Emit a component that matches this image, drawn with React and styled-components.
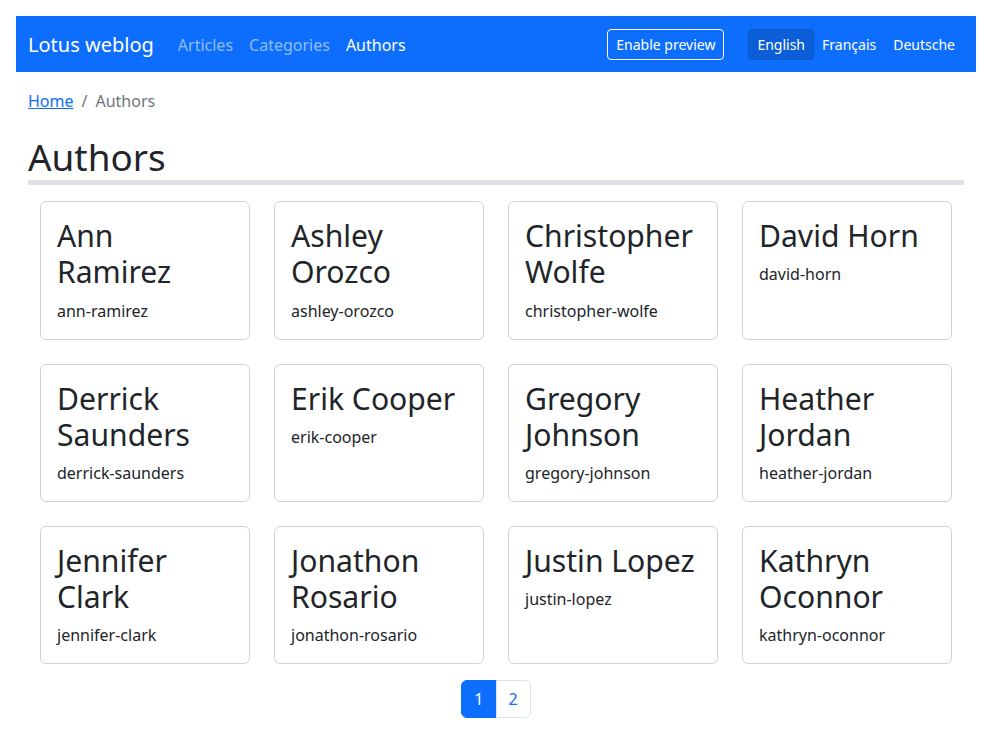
import React from "react";
import styled, { createGlobalStyle } from "styled-components";

const GlobalStyle = createGlobalStyle`
  * { box-sizing: border-box; }
  body {
    margin: 0;
    font-family: "Noto Sans", "Liberation Sans", sans-serif;
    font-size: 16px;
    line-height: 1.5;
    color: #212529;
    background: #fff;
  }
`;

const authors = [
  ["Ann Ramirez", "ann-ramirez"],
  ["Ashley Orozco", "ashley-orozco"],
  ["Christopher Wolfe", "christopher-wolfe"],
  ["David Horn", "david-horn"],
  ["Derrick Saunders", "derrick-saunders"],
  ["Erik Cooper", "erik-cooper"],
  ["Gregory Johnson", "gregory-johnson"],
  ["Heather Jordan", "heather-jordan"],
  ["Jennifer Clark", "jennifer-clark"],
  ["Jonathon Rosario", "jonathon-rosario"],
  ["Justin Lopez", "justin-lopez"],
  ["Kathryn Oconnor", "kathryn-oconnor"],
];

const Page = () => {
  return (
    <Container>
      <GlobalStyle />
      <Navbar>
        <Brand href="#">Lotus weblog</Brand>
        <NavLinks>
          <NavLink href="#">Articles</NavLink>
          <NavLink href="#">Categories</NavLink>
          <NavLink href="#" active>
            Authors
          </NavLink>
        </NavLinks>
        <RightSide>
          <OutlineButton>Enable preview</OutlineButton>
          <LangGroup>
            <LangButton active>English</LangButton>
            <LangButton>Français</LangButton>
            <LangButton>Deutsche</LangButton>
          </LangGroup>
        </RightSide>
      </Navbar>
      <Main>
        <Breadcrumb>
          <Crumb>
            <a href="#">Home</a>
          </Crumb>
          <Divider>/</Divider>
          <Crumb current>Authors</Crumb>
        </Breadcrumb>
        <Title>Authors</Title>
        <Grid>
          {authors.map(([name, slug]) => (
            <Card key={slug}>
              <CardTitle>{name}</CardTitle>
              <CardText>{slug}</CardText>
            </Card>
          ))}
        </Grid>
        <Pagination>
          <PageItem active first>
            1
          </PageItem>
          <PageItem last>2</PageItem>
        </Pagination>
      </Main>
    </Container>
  );
};

const Container = styled.div`
  width: 960px;
  margin: 16px auto 0;
`;
const Navbar = styled.nav`
  height: 56px;
  background: #0d6efd;
  display: flex;
  align-items: center;
  padding: 2px 12px 0;
`;
const Brand = styled.a`
  color: #fff;
  font-size: 20px;
  text-decoration: none;
  margin-right: 16px;
  white-space: nowrap;
`;
const NavLinks = styled.div`
  display: flex;
`;
const NavLink = styled.a`
  padding: 8px;
  color: ${(p) => (p.active ? "#fff" : "rgba(255,255,255,0.55)")};
  text-decoration: none;
`;
const RightSide = styled.div`
  margin-left: auto;
  display: flex;
  align-items: center;
  gap: 24px;
  margin-top: -2px;
`;
const OutlineButton = styled.button`
  font-family: inherit;
  font-size: 14px;
  line-height: 1.5;
  padding: 4px 8px;
  color: #fff;
  background: transparent;
  border: 1px solid #fff;
  border-radius: 4px;
`;
const LangGroup = styled.div`
  display: flex;
`;
const LangButton = styled.button`
  font-family: inherit;
  font-size: 14px;
  line-height: 1.5;
  padding: 4px 8px;
  color: #fff;
  background: ${(p) => (p.active ? "#0b5ed7" : "transparent")};
  border: 1px solid ${(p) => (p.active ? "#0a58ca" : "transparent")};
  border-radius: 4px;
  & + & {
    margin-left: -1px;
  }
`;
const Main = styled.div`
  padding: 17px 12px 0;
`;
const Breadcrumb = styled.div`
  display: flex;
  margin-bottom: 22px;
`;
const Crumb = styled.span`
  color: ${(p) => (p.current ? "#6c757d" : "#0d6efd")};
  a {
    color: #0d6efd;
  }
`;
const Divider = styled.span`
  color: #6c757d;
  padding: 0 8px;
`;
const Title = styled.h1`
  margin: 0 0 16px;
  font-size: calc(1.375rem + 1.5vw);
  font-weight: 400;
  line-height: 1.2;
  padding-bottom: 1px;
  border-bottom: 5px solid #dee2e6;
`;
const Grid = styled.div`
  display: grid;
  grid-template-columns: repeat(4, 1fr);
  gap: 24px;
  padding: 0 12px;
`;
const Card = styled.div`
  border: 1px solid rgba(0, 0, 0, 0.175);
  border-radius: 6px;
  padding: 16px;
`;
const CardTitle = styled.h2`
  margin: 0 0 8px;
  font-size: calc(1.325rem + 0.9vw);
  font-weight: 400;
  line-height: 1.2;
`;
const CardText = styled.p`
  margin: 0;
`;
const Pagination = styled.div`
  display: flex;
  justify-content: center;
  margin-top: 16px;
`;
const PageItem = styled.a`
  display: block;
  padding: 6px 12px;
  line-height: 1.5;
  color: ${(p) => (p.active ? "#fff" : "#0d6efd")};
  background: ${(p) => (p.active ? "#0d6efd" : "#fff")};
  border: 1px solid ${(p) => (p.active ? "#0d6efd" : "#dee2e6")};
  margin-left: ${(p) => (p.first ? "0" : "-1px")};
  border-radius: ${(p) =>
    p.first ? "6px 0 0 6px" : p.last ? "0 6px 6px 0" : "0"};
  text-decoration: none;
`;

export default function App() {
  return <Page />;
}
